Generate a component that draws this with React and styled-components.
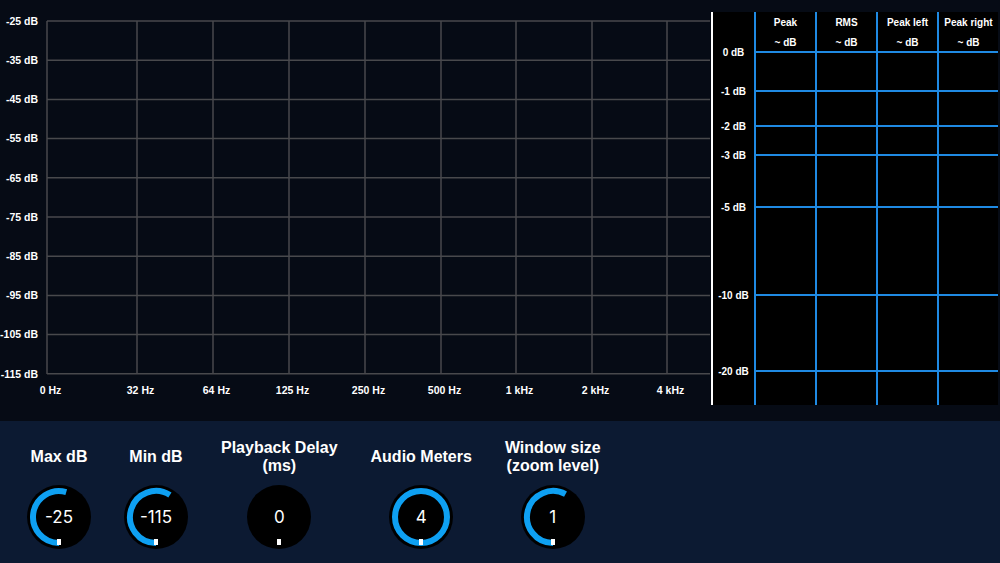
import React from "react"
import styled, { createGlobalStyle } from "styled-components"

const GlobalStyle = createGlobalStyle`
  html, body {
    margin: 0;
    padding: 0;
    background: #060b15;
  }
  body {
    font-family: "Liberation Sans", Arial, sans-serif;
    color: #ffffff;
  }
`

const Page = styled.div`
  width: 1000px;
  height: 563px;
  display: flex;
  flex-direction: column;
  overflow: hidden;
  background: #060b15;
`

const Top = styled.div`
  height: 421px;
  display: flex;
  flex: 0 0 auto;
`

const Spectrum = styled.svg`
  width: 711px;
  height: 421px;
  flex: 0 0 auto;
  display: block;
  text {
    fill: #ffffff;
    font-family: "Liberation Sans", Arial, sans-serif;
    font-weight: bold;
    font-size: 10.5px;
  }
`

const MeterPanel = styled.div`
  margin-top: 12px;
  height: 393px;
  width: 285px;
  border-left: 2px solid #ffffff;
  background: #000000;
  display: flex;
  flex-direction: column;
`

const MeterHeader = styled.div`
  display: grid;
  grid-template-columns: 41px repeat(4, 1fr);
  height: 40px;
`

const HeadCell = styled.div`
  border-left: ${({ $blank }) => ($blank ? "none" : "2px solid #1f8ae3")};
  display: flex;
  flex-direction: column;
  align-items: center;
  padding-top: 1px;
  font-size: 10px;
  font-weight: bold;
  line-height: 20px;
`

const Scale = styled.svg`
  width: 285px;
  height: 353px;
  display: block;
  overflow: visible;
  text {
    fill: #ffffff;
    font-family: "Liberation Sans", Arial, sans-serif;
    font-weight: bold;
    font-size: 10px;
  }
`

const Controls = styled.div`
  flex: 1;
  background: #0c1a32;
  display: flex;
  align-items: flex-start;
  gap: 33px;
  padding: 16px 0 0 27px;
`

const Control = styled.div`
  display: flex;
  flex-direction: column;
  align-items: center;
`

const Label = styled.div`
  height: 40px;
  display: flex;
  align-items: center;
  text-align: center;
  font-size: 16px;
  font-weight: bold;
  line-height: 18px;
  white-space: nowrap;
`

const Knob = styled.div`
  position: relative;
  margin-top: 8px;
  width: 64px;
  height: 64px;
  border-radius: 50%;
  background: #000000;
  display: flex;
  align-items: center;
  justify-content: center;
  svg {
    position: absolute;
    inset: 0;
  }
`

const KnobValue = styled.span`
  position: relative;
  font-family: Inter, "Liberation Sans", sans-serif;
  font-size: 17px;
  color: #ffffff;
`

const yLabels = [-25, -35, -45, -55, -65, -75, -85, -95, -105, -115]
const xLines = [47, 137, 213, 289, 365, 441, 516, 592, 667]
const xLabels = ["0 Hz", "32 Hz", "64 Hz", "125 Hz", "250 Hz", "500 Hz", "1 kHz", "2 kHz", "4 kHz"]

const meterScale = [
  { db: 0, y: 0 },
  { db: -1, y: 39 },
  { db: -2, y: 74 },
  { db: -3, y: 103 },
  { db: -5, y: 155 },
  { db: -10, y: 243 },
  { db: -20, y: 319 },
]
const channels = ["Peak", "RMS", "Peak left", "Peak right"]
const channelX = [42, 103, 164, 225]

const controls = [
  { label: ["Max dB"], value: "-25", fill: 0.545 },
  { label: ["Min dB"], value: "-115", fill: 0.59 },
  { label: ["Playback Delay", "(ms)"], value: "0", fill: 0 },
  { label: ["Audio Meters"], value: "4", fill: 1 },
  { label: ["Window size", "(zoom level)"], value: "1", fill: 0.58 },
]

const arcPath = (fill) => {
  const r = 26
  const a = Math.PI + fill * Math.PI * 2
  const x = 32 + r * Math.sin(a)
  const y = 32 - r * Math.cos(a)
  const large = fill > 0.5 ? 1 : 0
  return `M 32 ${32 + r} A ${r} ${r} 0 ${large} 1 ${x.toFixed(2)} ${y.toFixed(2)}`
}

const Dial = ({ value, fill }) => (
  <Knob>
    <svg width="64" height="64" viewBox="0 0 64 64">
      {fill >= 1 && <circle cx="32" cy="32" r="26" fill="none" stroke="#0ea0f2" strokeWidth="6" />}
      {fill > 0 && fill < 1 && <path d={arcPath(fill)} fill="none" stroke="#0ea0f2" strokeWidth="6" />}
      <rect x="30" y="54" width="4" height="6" fill="#ffffff" />
    </svg>
    <KnobValue>{value}</KnobValue>
  </Knob>
)

const App = () => {
  return (
    <Page>
      <GlobalStyle />
      <Top>
        <Spectrum viewBox="0 0 711 421">
          {yLabels.map((db, i) => {
            const y = 21 + i * 39.2
            return (
              <g key={db}>
                <line x1="47" x2="710" y1={y} y2={y} stroke="#48494c" strokeWidth="1.5" />
                <text x="38" y={y + 3.8} textAnchor="end">{db} dB</text>
              </g>
            )
          })}
          {xLines.map((x, i) => (
            <g key={x}>
              <line x1={x} x2={x} y1="21" y2="374" stroke="#48494c" strokeWidth="1.5" />
              <text x={x + 3.5} y="393.5" textAnchor="middle">{xLabels[i]}</text>
            </g>
          ))}
        </Spectrum>
        <MeterPanel>
          <MeterHeader>
            <HeadCell $blank />
            {channels.map((c) => (
              <HeadCell key={c}>
                <span>{c}</span>
                <span>~ dB</span>
              </HeadCell>
            ))}
          </MeterHeader>
          <Scale viewBox="0 0 285 353">
            {channelX.map((x) => (
              <line key={x} x1={x} x2={x} y1="0" y2="353" stroke="#1f8ae3" strokeWidth="2" />
            ))}
            {meterScale.map(({ db, y }) => (
              <g key={db}>
                <line x1="41" x2="285" y1={y} y2={y} stroke="#1f8ae3" strokeWidth="2" />
                <text x="20.5" y={y + 3.5} textAnchor="middle">{db} dB</text>
              </g>
            ))}
          </Scale>
        </MeterPanel>
      </Top>
      <Controls>
        {controls.map((c) => (
          <Control key={c.label[0]}>
            <Label>
              <span>
                {c.label.map((l, i) => (
                  <React.Fragment key={l}>
                    {i > 0 && <br />}
                    {l}
                  </React.Fragment>
                ))}
              </span>
            </Label>
            <Dial value={c.value} fill={c.fill} />
          </Control>
        ))}
      </Controls>
    </Page>
  )
}

export default App
